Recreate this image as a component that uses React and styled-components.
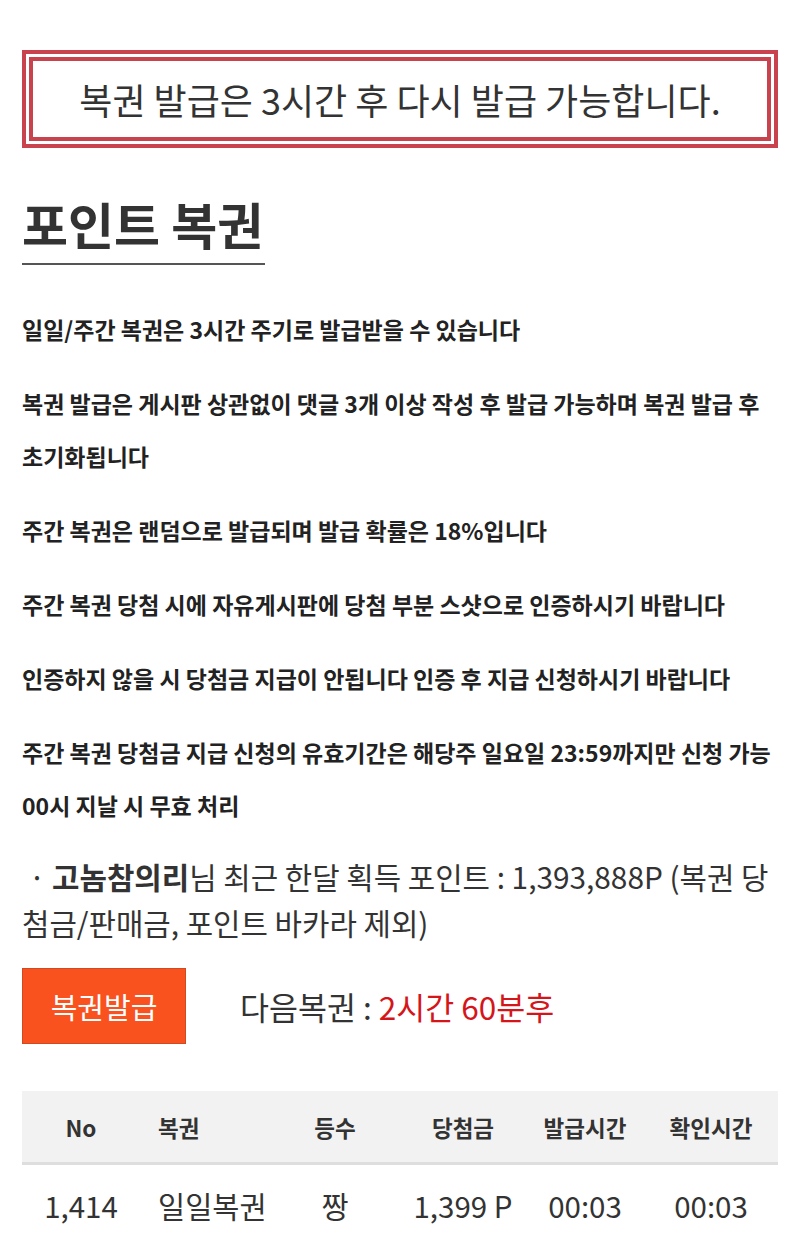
import React from "react";
import styled, { createGlobalStyle } from "styled-components";

const GlobalStyle = createGlobalStyle`
  html, body {
    margin: 0;
    padding: 0;
    background: #fff;
  }
  body {
    font-family: "Noto Sans CJK KR", "Noto Sans", sans-serif;
    color: #333;
  }
`;

const Page = styled.div`
  padding: 50px 22px 0;
  width: 756px;
`;

const Notice = styled.div`
  border: 11px double #c9434f;
  height: 98px;
  box-sizing: border-box;
  display: flex;
  align-items: center;
  justify-content: center;
  font-size: 36px;
  font-weight: 400;
  color: #333;
`;

const Title = styled.h2`
  display: inline-block;
  margin: 43px 0 0;
  padding-bottom: 8px;
  font-size: 50px;
  font-weight: 700;
  color: #333;
  line-height: 64px;
  border-bottom: 2px solid #555;
  width: 243px;
  white-space: nowrap;
`;

const Rules = styled.div`
  margin-top: 38px;
`;

const Rule = styled.p`
  margin: 0 0 21px;
  font-size: 23px;
  font-weight: 700;
  line-height: 53px;
  color: #222;
  word-break: keep-all;
`;

const Stat = styled.p`
  margin: 14px 0 0;
  font-size: 29.8px;
  line-height: 46px;
  color: #333;
  word-break: break-all;
  b {
    font-weight: 700;
  }
`;

const IssueRow = styled.div`
  display: flex;
  align-items: center;
  gap: 54px;
  margin-top: 23px;
`;

const IssueButton = styled.button`
  width: 164px;
  height: 76px;
  background: #f9521f;
  border: 1px solid #cf4a22;
  color: #fff;
  font-family: inherit;
  font-size: 29px;
  padding: 0;
  cursor: pointer;
`;

const NextInfo = styled.div`
  font-size: 31.5px;
  color: #333;
  span {
    color: #d4161b;
  }
`;

const Table = styled.div`
  margin-top: 47px;
`;

const Row = styled.div`
  display: grid;
  grid-template-columns: 118px 130px 130px 126px 118px 134px;
  align-items: center;
  height: ${(p) => (p.$head ? "71px" : "80px")};
  background: ${(p) => (p.$head ? "#f2f2f2" : "transparent")};
  border-bottom: ${(p) => (p.$head ? "3px solid #dedede" : "none")};
  font-size: ${(p) => (p.$head ? "22.5px" : "29.5px")};
  font-weight: ${(p) => (p.$head ? 700 : 400)};
  color: #333;
`;

const Cell = styled.div`
  text-align: ${(p) => (p.$left ? "left" : "center")};
  padding-left: ${(p) => (p.$left ? "18px" : "0")};
  white-space: nowrap;
`;

const rules = [
  "일일/주간 복권은 3시간 주기로 발급받을 수 있습니다",
  "복권 발급은 게시판 상관없이 댓글 3개 이상 작성 후 발급 가능하며 복권 발급 후 초기화됩니다",
  "주간 복권은 랜덤으로 발급되며 발급 확률은 18%입니다",
  "주간 복권 당첨 시에 자유게시판에 당첨 부분 스샷으로 인증하시기 바랍니다",
  "인증하지 않을 시 당첨금 지급이 안됩니다 인증 후 지급 신청하시기 바랍니다",
  "주간 복권 당첨금 지급 신청의 유효기간은 해당주 일요일 23:59까지만 신청 가능 00시 지날 시 무효 처리",
];

const headers = ["No", "복권", "등수", "당첨금", "발급시간", "확인시간"];
const rows = [["1,414", "일일복권", "짱", "1,399 P", "00:03", "00:03"]];

export default function App() {
  return (
    <>
      <GlobalStyle />
      <Page>
        <Notice>복권 발급은 3시간 후 다시 발급 가능합니다.</Notice>
        <Title>포인트 복권</Title>
        <Rules>
          {rules.map((r) => (
            <Rule key={r}>{r}</Rule>
          ))}
        </Rules>
        <Stat>
          {"\u00a0· "}
          <b>고놈참의리</b>님 최근 한달 획득 포인트 : 1,393,888P (복권 당첨금/판매금, 포인트 바카라 제외)
        </Stat>
        <IssueRow>
          <IssueButton>복권발급</IssueButton>
          <NextInfo>
            다음복권 : <span>2시간 60분후</span>
          </NextInfo>
        </IssueRow>
        <Table>
          <Row $head>
            {headers.map((h, i) => (
              <Cell key={h} $left={i === 1}>
                {h}
              </Cell>
            ))}
          </Row>
          {rows.map((r) => (
            <Row key={r[0]}>
              {r.map((c, i) => (
                <Cell key={i} $left={i === 1}>
                  {c}
                </Cell>
              ))}
            </Row>
          ))}
        </Table>
      </Page>
    </>
  );
}
